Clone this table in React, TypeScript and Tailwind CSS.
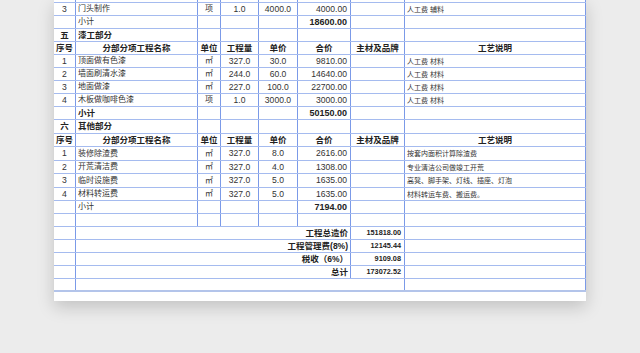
import React from "react";

const GRID =
  "grid grid-cols-[22px_122px_23px_38px_39px_53px_54px_181px] border-b border-[#a5bbef]";
const CELL = "flex items-center overflow-hidden whitespace-nowrap border-r border-[#7b9ae8]";

type Cell = { t?: string; b?: boolean; a?: "c" | "l" | "r"; s?: string };

function Row({ cells, h }: { cells: Cell[]; h: string }) {
  return (
    <div className={`${GRID} ${h}`}>
      {cells.map((c, i) => {
        const align =
          c.a === "c" ? "justify-center" : c.a === "r" ? "justify-end pr-[3px]" : "justify-start pl-[2px]";
        return (
          <div
            key={i}
            className={`${CELL} ${align} ${c.b ? "font-bold text-[#222]" : "text-[#333]"} ${c.s ?? ""}`}
          >
            {c.t}
          </div>
        );
      })}
    </div>
  );
}

const T = "text-[8px]";
const TB = "text-[8.5px]";
const TN = "text-[8.6px]";
const TR = "text-[7px]";

function item(no: string, name: string, unit: string, qty: string, price: string, total: string, remark: string): Cell[] {
  return [
    { t: no, a: "c", s: TN },
    { t: name, a: "l", s: T },
    { t: unit, a: "c", s: T },
    { t: qty, a: "c", s: TN },
    { t: price, a: "c", s: TN },
    { t: total, a: "r", s: TN },
    {},
    { t: remark, a: "l", s: TR },
  ];
}

function sub(total: string, bold: boolean): Cell[] {
  return [
    {},
    { t: "小计", a: "l", s: bold ? TB : T, b: bold },
    {},
    {},
    {},
    { t: total, a: "r", b: true, s: "text-[9px]" },
    {},
    {},
  ];
}

function section(no: string, name: string): Cell[] {
  return [
    { t: no, a: "c", b: true, s: TB },
    { t: name, a: "l", b: true, s: TB },
    {},
    {},
    {},
    {},
    {},
    {},
  ];
}

function header(withRemark: boolean): Cell[] {
  const h = ["序号", "分部分项工程名称", "单位", "工程量", "单价", "合价", "主材及品牌", withRemark ? "工艺说明" : ""];
  return h.map((t) => ({ t, a: "c" as const, b: true, s: TB }));
}

const empty: Cell[] = [{}, {}, {}, {}, {}, {}, {}, {}];

function TotalRow({ label, value, last }: { label?: string; value?: string; last?: boolean }) {
  return (
    <div
      className={`grid grid-cols-[22px_122px_23px_38px_39px_53px_54px_181px] ${
        last ? "h-[13px] border-b-2 border-[#b3c4ea]" : "h-[13px] border-b border-[#a5bbef]"
      }`}
    >
      <div className={CELL} />
      {last ? (
        <div className={`${CELL} col-span-6`} />
      ) : (
        <>
          <div className={`${CELL} col-span-5 justify-end pr-[2px] font-bold text-[8.5px] text-[#222]`}>{label}</div>
          <div className={`${CELL} justify-end pr-[3px] font-bold text-[7.3px] text-[#222]`}>{value}</div>
        </>
      )}
      <div className={CELL} />
    </div>
  );
}

export default function App() {
  return (
    <div className="w-[640px] h-[353px] bg-[#ececec] pl-[54px] overflow-hidden font-['Liberation_Sans','Noto_Sans_CJK_SC',sans-serif] leading-none">
      <div className="w-[532px] h-[301px] bg-white shadow-[0_6px_16px_rgba(0,0,0,0.18)] flex flex-col">
        <Row cells={empty} h="h-[3px]" />
        <Row cells={item("3", "门头制作", "项", "1.0", "4000.0", "4000.00", "人工费 辅料")} h="h-[13px]" />
        <Row cells={sub("18600.00", false)} h="h-[13px]" />
        <Row cells={section("五", "漆工部分")} h="h-[13px]" />
        <Row cells={header(true)} h="h-[13px]" />
        <Row cells={item("1", "顶面做有色漆", "㎡", "327.0", "30.0", "9810.00", "人工费 材料")} h="h-[13px]" />
        <Row cells={item("2", "墙面刷清水漆", "㎡", "244.0", "60.0", "14640.00", "人工费 材料")} h="h-[13px]" />
        <Row cells={item("3", "地面做漆", "㎡", "227.0", "100.0", "22700.00", "人工费 材料")} h="h-[13px]" />
        <Row cells={item("4", "木板做咖啡色漆", "项", "1.0", "3000.0", "3000.00", "人工费 材料")} h="h-[13px]" />
        <Row cells={sub("50150.00", true)} h="h-[13px]" />
        <Row cells={section("六", "其他部分")} h="h-[14px]" />
        <Row cells={header(true)} h="h-[13px]" />
        <Row cells={item("1", "装修除渣费", "㎡", "327.0", "8.0", "2616.00", "按套内面积计算除渣费")} h="h-[14px]" />
        <Row cells={item("2", "开荒清洁费", "㎡", "327.0", "4.0", "1308.00", "专业清洁公司做竣工开荒")} h="h-[13px]" />
        <Row cells={item("3", "临时设施费", "㎡", "327.0", "5.0", "1635.00", "高凳、脚手架、灯线、插座、灯泡")} h="h-[14px]" />
        <Row cells={item("4", "材料转运费", "㎡", "327.0", "5.0", "1635.00", "材料转运车费、搬运费。")} h="h-[13px]" />
        <Row cells={sub("7194.00", false)} h="h-[13px]" />
        <Row cells={empty} h="h-[13px]" />
        <TotalRow label="工程总造价" value="151818.00" />
        <TotalRow label="工程管理费(8%)" value="12145.44" />
        <TotalRow label="税收（6%）" value="9109.08" />
        <TotalRow label="总计" value="173072.52" />
        <TotalRow last />
      </div>
    </div>
  );
}
